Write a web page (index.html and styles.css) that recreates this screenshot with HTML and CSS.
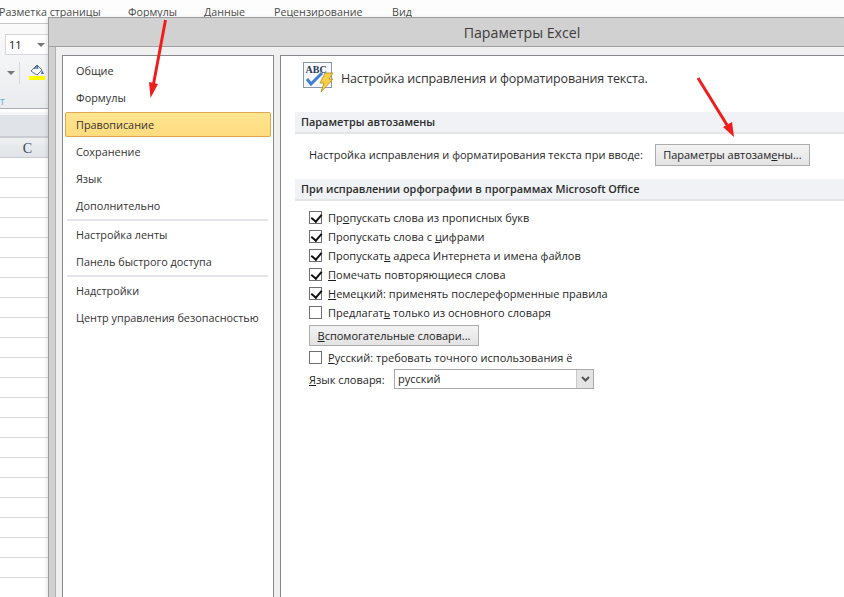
FILE: index.html
```html
<!DOCTYPE html>
<html lang="ru">
<head>
<meta charset="utf-8">
<title>Параметры Excel</title>
<link rel="stylesheet" href="styles.css">
</head>
<body>
<div class="excel">
  <div class="tabs">
    <span class="tab tab-layout">Разметка страницы</span>
    <span class="tab tab-formulas">Формулы</span>
    <span class="tab tab-data">Данные</span>
    <span class="tab tab-review">Рецензирование</span>
    <span class="tab tab-view">Вид</span>
  </div>
  <div class="ribbon">
    <div class="font-row"><span class="font-size">11</span><span class="tri"></span></div>
    <div class="tool-row">
      <span class="tri tri-left"></span>
      <span class="sep"></span>
      <svg class="fill-icon" width="16" height="18" viewBox="0 0 16 18"><path d="M2 8 8 2l5 5-5 5z" fill="#fff" stroke="#5b6f8c"/><path d="M5 6 8 2l1 4" fill="#7aa7d8" stroke="#45618a"/><path d="M13 7l2 4h-3z" fill="#3d6fb0"/><rect x="0" y="13" width="16" height="4" fill="#ffff00"/></svg>
    </div>
    <div class="ribbon-foot">т</div>
  </div>
  <div class="formula-bar"></div>
  <div class="col-head"><span>C</span></div>
  <div class="grid">
    <div></div><div></div><div></div><div></div><div></div><div></div><div></div><div></div><div></div><div></div><div></div><div></div><div></div><div></div><div></div><div></div><div></div><div></div><div></div><div></div><div></div><div></div>
  </div>
</div>

<section class="dialog">
  <header class="title">Параметры Excel</header>
  <div class="body">
    <nav class="nav">
      <a>Общие</a>
      <a>Формулы</a>
      <a class="active">Правописание</a>
      <a>Сохранение</a>
      <a>Язык</a>
      <a>Дополнительно</a>
      <hr>
      <a>Настройка ленты</a>
      <a>Панель быстрого доступа</a>
      <hr>
      <a>Надстройки</a>
      <a>Центр управления безопасностью</a>
    </nav>
    <main class="panel">
      <div class="intro">
        <svg class="abc-icon" width="32" height="32" viewBox="0 0 32 32">
          <rect x="0.500" y="1.500" width="28" height="25" fill="#f7f9fc" stroke="#8a97ab"/>
          <text x="2.500" y="12" class="abc-text">ABC</text>
          <path d="M4 18l4 5L19 12" fill="none" stroke="#3f7fd6" stroke-width="3"/>
          <path d="M22 12h8l-4 6h4L18 31l3-9h-4z" fill="#f7cf45" stroke="#b58a1e" stroke-width=".8"/>
        </svg>
        <span>Настройка исправления и форматирования текста.</span>
      </div>
      <h2 class="band band-first">Параметры автозамены</h2>
      <div class="autocorrect">
        <span>Настройка исправления и форматирования текста при вводе:</span>
        <button class="btn btn-auto">Параметры автозам<u>е</u>ны...</button>
      </div>
      <h2 class="band">При исправлении орфографии в программах Microsoft Office</h2>
      <div class="options">
        <label class="opt"><span class="box on"></span><span>Пр<u>о</u>пускать слова из прописных букв</span></label>
        <label class="opt"><span class="box on"></span><span>Пропускать слова с <u>ц</u>ифрами</span></label>
        <label class="opt"><span class="box on"></span><span>Пропускат<u>ь</u> адреса Интернета и имена файлов</span></label>
        <label class="opt"><span class="box on"></span><span><u>П</u>омечать повторяющиеся слова</span></label>
        <label class="opt"><span class="box on"></span><span><u>Н</u>емецкий: применять послереформенные правила</span></label>
        <label class="opt"><span class="box"></span><span>Предлагат<u>ь</u> только из основного словаря</span></label>
        <button class="btn btn-dict"><u>В</u>спомогательные словари...</button>
        <label class="opt opt-ru"><span class="box"></span><span><u>Р</u>усский: требовать точного использования ё</span></label>
        <div class="lang">
          <span class="lang-label"><u>Я</u>зык словаря:</span>
          <div class="select"><span class="select-value">русский</span><span class="select-arrow"><svg width="9" height="6" viewBox="0 0 9 6"><path d="M1 1l3.500 3.500L8 1" fill="none" stroke="#555" stroke-width="2"/></svg></span></div>
        </div>
      </div>
    </main>
  </div>
</section>

<svg class="arrows" width="844" height="597" viewBox="0 0 844 597">
  <path d="M165.500 20 153.500 84" stroke="#f21c1c" stroke-width="3" fill="none"/>
  <path d="M150.500 98 149 82l9 2z" fill="#f21c1c"/>
  <path d="M698 78 727 125" stroke="#f21c1c" stroke-width="3" fill="none"/>
  <path d="M734 137 723 127l9-5z" fill="#f21c1c"/>
</svg>
</body>
</html>
```
FILE: styles.css
```css
* { box-sizing: border-box; }
html, body { margin: 0; height: 100%; }
body {
  width: 844px;
  height: 597px;
  overflow: hidden;
  position: relative;
  background: #fff;
  font-family: "Open Sans", "Noto Sans", sans-serif;
  font-size: 11px;
  color: #262626;
}
u { text-underline-offset: 1px; }

/* Excel behind the dialog */
.excel { width: 48px; height: 597px; display: flex; flex-direction: column; }
.tabs { height: 24px; width: 844px; position: relative; background: #fdfdfd; border-bottom: 1px solid #c4c6c9; flex: none; }
.tab { position: absolute; top: 4px; color: #4a4a4a; font-size: 10.7px; line-height: 16px; white-space: nowrap; }
.tab-layout { left: -1px; }
.tab-formulas { left: 128px; }
.tab-data { left: 204px; }
.tab-review { left: 274px; }
.tab-view { left: 392px; }
.ribbon { height: 85px; background: linear-gradient(#fbfbfc, #e9ebee); border-bottom: 1px solid #a9adb3; flex: none; display: flex; flex-direction: column; }
.font-row { margin: 10px 0 0 5px; width: 43px; height: 21px; display: flex; align-items: center; border: 1px solid #d5d7da; border-right: 0; background: #fff; font-size: 11px; color: #111; padding-left: 3px; }
.font-size { flex: 1; }
.tri { width: 0; height: 0; border: 4px solid transparent; border-top-color: #777; border-bottom: 0; margin-right: 3px; }
.tool-row { height: 30px; margin-top: 3px; display: flex; align-items: center; }
.tri-left { margin: 0 4px 0 7px; }
.sep { width: 1px; height: 22px; background: #d6d8db; margin-right: 9px; }
.fill-icon { flex: none; width: 16px; height: 18px; margin: -3px -4px 0 0; }
.ribbon-foot { color: #5aaee0; font-size: 10px; line-height: 12px; margin-top: 7px; text-align: left; }
.formula-bar { height: 26px; background: #e0e3e8; border-top: 3px solid #f5f6f7; border-bottom: 2px solid #c9ccd1; flex: none; margin-top: 3px; }
.col-head { height: 20px; background: linear-gradient(#eef0f2, #e0e3e7); flex: none; text-align: right; padding-right: 16px; font-family: "Liberation Serif", serif; font-size: 14px; line-height: 22px; color: #3a4a60; border-bottom: 1px solid #c8cacd; white-space: nowrap; }
.grid { flex: 1; }
.grid div { height: 20px; border-bottom: 1px solid #d9d9d9; }

/* Dialog window */
.dialog { position: absolute; left: 48px; top: 17px; width: 796px; height: 580px; background: #d1d1d1; border-top: 1px solid #9a9a9a; border-left: 1px solid #9a9a9a; display: flex; flex-direction: column; box-shadow: -2px 0 3px rgba(0,0,0,.08); }
.title { height: 29px; flex: none; padding-left: 151px; text-align: center; font-size: 14.2px; line-height: 29px; color: #3c3c3c; border-bottom: 1px solid #9f9f9f; }
.body { flex: 1; margin-left: 6px; background: #f0f0f0; padding: 8px 0 0 6px; display: flex; gap: 6px; min-height: 0; border-left: 1px solid #b0b0b0; }
.nav { width: 212px; background: #fff; border: 1px solid #85888d; border-bottom: 0; padding-top: 0; display: flex; flex-direction: column; }
.nav a { height: 27px; padding-left: 13px; line-height: 27px; color: #333; font-size: 10.85px; margin-left: 0; }
.nav a.active { height: 25px; line-height: 23px; margin: 1px 2px 1px 2px; padding-left: 10px; background: linear-gradient(#ffe48f, #ffdc7f); border: 1px solid #e0a852; border-radius: 2px; }
.nav hr { margin: 0 5px 0 4px; height: 2px; background: #e4e5e9; border: 0; flex: none; }
.nav a:first-child { margin-top: 1px; }
.panel { flex: 1; background: #fff; border: 1px solid #85888d; border-right: 0; border-bottom: 0; padding-top: 0; }
.intro { height: 56px; padding: 5px 0 0 22px; display: flex; align-items: flex-start; gap: 6px; font-size: 12.5px; letter-spacing: -.15px; color: #333; }
.intro span { line-height: 38px; margin-top: -1px; }
.abc-icon { flex: none; }
.abc-text { font-family: "Liberation Serif", serif; font-weight: 700; font-size: 10px; letter-spacing: 0; fill: #2b3a55; }
.band { margin: 0 0 0 14px; height: 22px; background: #f0f2f5; border-bottom: 2px solid #e3e5e8; font-size: 10.9px; font-weight: 600; line-height: 20px; padding-left: 6px; color: #2c2c2c; }
.autocorrect { height: 45px; padding: 0 0 4px 28px; display: flex; align-items: center; color: #1f1f1f; }
.btn { font: inherit; font-size: 11px; color: #222; background: linear-gradient(#f3f3f3, #e3e3e3); border: 1px solid #acacac; padding: 0; height: 22px; line-height: 18px; }
.btn-auto { width: 155px; margin-left: 12px; }
.options { padding: 7px 0 0 28px; display: flex; flex-direction: column; align-items: flex-start; color: #1f1f1f; }
.opt { height: 19px; display: flex; align-items: center; gap: 6px; }
.box { width: 13px; height: 13px; flex: none; background: #fff; border: 1px solid #707070; position: relative; }
.box.on::after { content: ""; position: absolute; left: 3px; top: 0; width: 5px; height: 8px; border: solid #111; border-width: 0 2px 2px 0; transform: rotate(40deg); }
.btn-dict { width: 170px; height: 21px; margin: 3px 0 0 0; }
.opt-ru { margin-top: 2px; }
.lang { display: flex; align-items: center; height: 20px; margin-top: 2px; }
.lang-label { width: 85px; }
.select { width: 200px; height: 20px; border: 1px solid #a9a9a9; display: flex; justify-content: space-between; background: #fff; }
.select-value { padding-left: 3px; line-height: 17px; }
.select-arrow { width: 17px; background: #e4e4e4; border-left: 1px solid #c9c9c9; display: flex; align-items: center; justify-content: center; }

.arrows { position: absolute; left: 0; top: 0; pointer-events: none; }
```
